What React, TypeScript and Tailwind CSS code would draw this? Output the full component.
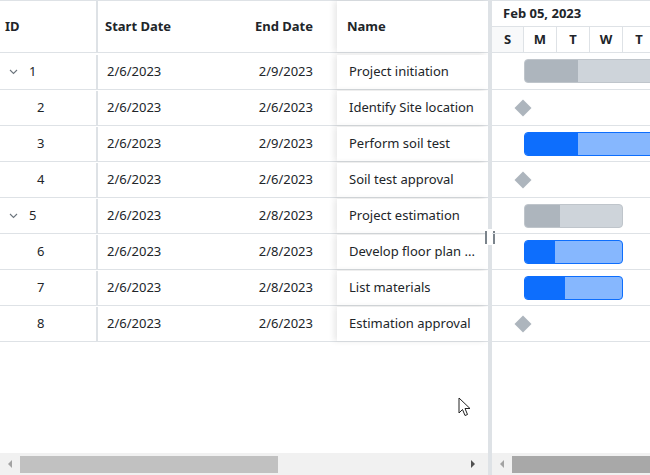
import { ReactNode } from "react";

type Task = {
    id: number;
    start: string;
    end: string;
    name: string;
    parent?: boolean;
    kind: "summary" | "task" | "milestone";
    width?: number;
    progress?: number;
};

const tasks: Task[] = [
    { id: 1, start: "2/6/2023", end: "2/9/2023", name: "Project initiation", parent: true, kind: "summary", width: 140, progress: 53 },
    { id: 2, start: "2/6/2023", end: "2/6/2023", name: "Identify Site location", kind: "milestone" },
    { id: 3, start: "2/6/2023", end: "2/9/2023", name: "Perform soil test", kind: "task", width: 140, progress: 53 },
    { id: 4, start: "2/6/2023", end: "2/6/2023", name: "Soil test approval", kind: "milestone" },
    { id: 5, start: "2/6/2023", end: "2/8/2023", name: "Project estimation", parent: true, kind: "summary", width: 99, progress: 35 },
    { id: 6, start: "2/6/2023", end: "2/8/2023", name: "Develop floor plan ...", kind: "task", width: 99, progress: 30 },
    { id: 7, start: "2/6/2023", end: "2/8/2023", name: "List materials", kind: "task", width: 99, progress: 40 },
    { id: 8, start: "2/6/2023", end: "2/6/2023", name: "Estimation approval", kind: "milestone" },
];

const days = ["S", "M", "T", "W", "T"];

function Chevron() {
    return (
        <svg width="9" height="6" viewBox="0 0 9 6" className="mr-[11px]">
            <polyline points="1,1 4.5,4.5 8,1" fill="none" stroke="#6c757d" strokeWidth="1.1" />
        </svg>
    );
}

function Bar({ task }: { task: Task }) {
    if (task.kind === "milestone") {
        return (
            <div className="absolute left-[25px] top-[12px] w-[12px] h-[12px] rotate-45 bg-[#adb5bd]" />
        );
    }
    const summary = task.kind === "summary";
    return (
        <div
            className={`absolute left-[32px] top-[6px] h-[24px] rounded-[4px] border overflow-hidden ${summary ? "bg-[#ced4da] border-[#bfc5cb]" : "bg-[#86b7fe] border-[#0d6efd]"
                }`}
            style={{ width: task.width }}
        >
            <div
                className={`h-full ${summary ? "bg-[#adb5bd]" : "bg-[#0d6efd]"}`}
                style={{ width: task.progress }}
            />
        </div>
    );
}

function ScrollArrow({ dir, dark }: { dir: "left" | "right"; dark?: boolean }) {
    const points = dir === "left" ? "5,0 5,8 1,4" : "0,0 0,8 4,4";
    return (
        <svg width="6" height="8" viewBox="0 0 6 8">
            <polygon points={points} fill={dark ? "#505050" : "#a3a3a3"} />
        </svg>
    );
}

function Cell({ className, children }: { className: string; children?: ReactNode }) {
    return <div className={`flex items-center shrink-0 ${className}`}>{children}</div>;
}

export default function App() {
    return (
        <div className="relative flex w-[650px] h-[475px] bg-white overflow-hidden text-[#212529] font-['Noto_Sans',sans-serif]">
            {/* grid pane */}
            <div className="flex flex-col w-[488px] shrink-0">
                <div className="flex-1 border-t border-[#dee2e6]">
                    <div className="flex h-[52px] border-b border-[#dee2e6] text-[13px] font-bold">
                        <Cell className="w-[98px] pl-[5px] border-r-2 border-[#dee2e6]">ID</Cell>
                        <Cell className="w-[142px] pl-[7px]">Start Date</Cell>
                        <Cell className="w-[97px] pr-[24px] justify-end">End Date</Cell>
                        <Cell className="w-[151px] pl-[10px] bg-white shadow-[-3px_0_6px_rgba(0,0,0,0.09)]">Name</Cell>
                    </div>
                    {tasks.map((t, i) => (
                        <div
                            key={t.id}
                            className={`flex border-b border-[#dee2e6] text-[13px] ${i === 0 ? "h-[37px] pt-[2px]" : "h-[36px] pt-[1px]"}`}
                        >
                            <Cell className={`w-[98px] border-r-2 border-[#dee2e6] ${t.parent ? "pl-[9px]" : "pl-[37px]"}`}>
                                {t.parent && <Chevron />}
                                {t.id}
                            </Cell>
                            <Cell className="w-[142px] pl-[9px]">{t.start}</Cell>
                            <Cell className="w-[97px] pr-[24px] justify-end">{t.end}</Cell>
                            <Cell className="w-[151px] pl-[12px] pr-[8px] bg-white shadow-[-3px_0_6px_rgba(0,0,0,0.09)] whitespace-nowrap">
                                {t.name}
                            </Cell>
                        </div>
                    ))}
                </div>
                <div className="flex items-center h-[22px] bg-[#f1f1f1]">
                    <div className="w-[20px] flex justify-center">
                        <ScrollArrow dir="left" />
                    </div>
                    <div className="w-[258px] h-[17px] bg-[#c1c1c1]" />
                    <div className="flex-1" />
                    <div className="w-[20px] flex justify-center mr-[4px]">
                        <ScrollArrow dir="right" dark />
                    </div>
                </div>
            </div>

            {/* splitter */}
            <div className="relative w-[4px] shrink-0 bg-[#dee2e6]">
                <div className="absolute left-[-3px] top-[229px] h-[16px] w-[10px] bg-white flex justify-between items-center">
                    <div className="w-[2px] h-[13px] bg-[#7b848c]" />
                    <div className="w-[2px] h-[13px] bg-[#7b848c]" />
                </div>
            </div>

            {/* chart pane */}
            <div className="flex flex-col flex-1 min-w-0">
                <div className="flex-1 border-t border-[#dee2e6]">
                    <div className="h-[26px] border-b border-[#dee2e6] flex items-center pl-[11px] pt-[1px] text-[13px] font-bold whitespace-nowrap">
                        Feb 05, 2023
                    </div>
                    <div className="flex h-[26px] border-b border-[#dee2e6] text-[13px] font-bold">
                        {days.map((d, i) => (
                            <div
                                key={i}
                                className={`shrink-0 flex items-center justify-center border-r border-[#dee2e6] ${i === 0 ? "w-[32px] bg-[#f8f9fa]" : "w-[33px]"}`}
                            >
                                {d}
                            </div>
                        ))}
                    </div>
                    {tasks.map((t, i) => (
                        <div key={t.id} className={`relative border-b border-[#dee2e6] ${i === 0 ? "h-[37px]" : "h-[36px]"}`}>
                            <Bar task={t} />
                        </div>
                    ))}
                </div>
                <div className="flex items-center h-[22px] bg-[#f1f1f1]">
                    <div className="w-[20px] flex justify-center">
                        <ScrollArrow dir="left" />
                    </div>
                    <div className="flex-1 h-[17px] bg-[#a8a8a8]" />
                </div>
            </div>

            {/* mouse pointer */}
            <svg className="absolute left-[458px] top-[397px]" width="14" height="22" viewBox="0 0 14 22">
                <path d="M1 1 L1 16 L4.5 12.5 L7 18.5 L9.5 17.5 L7 11.5 L12 11.5 Z" fill="white" stroke="#222" strokeWidth="1" />
            </svg>
        </div>
    );
}
